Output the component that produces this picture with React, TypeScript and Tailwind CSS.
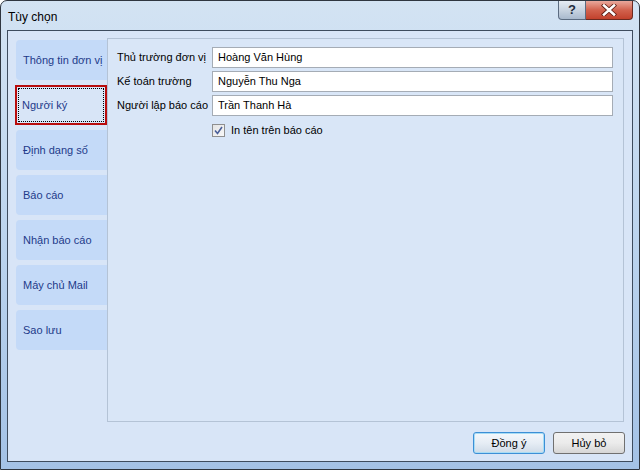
import React from 'react'

const tabs = [
  'Thông tin đơn vị',
  'Người ký',
  'Định dạng số',
  'Báo cáo',
  'Nhận báo cáo',
  'Máy chủ Mail',
  'Sao lưu',
]

const fields = [
  { label: 'Thủ trường đơn vị', value: 'Hoàng Văn Hùng' },
  { label: 'Kế toán trường', value: 'Nguyễn Thu Nga' },
  { label: 'Người lập báo cáo', value: 'Trần Thanh Hà' },
]

const font = { fontFamily: '"Liberation Sans", Arial, sans-serif' }

export default function App() {
  return (
    <div className="w-[640px] h-[470px] bg-white" style={font}>
      <div className="w-full h-full flex flex-col rounded-t-[7px] border border-[#2f3640] bg-gradient-to-b from-[#d3e3f3] via-[#bcd4ee] to-[#a4c2e6] overflow-hidden">
        {/* title bar */}
        <div className="h-[29px] flex items-start">
          <div className="pl-[7px] pt-[7px] text-[12px] text-black">Tùy chọn</div>
          <div className="ml-auto mr-[6px] flex">
            <div className="w-[28px] h-[19px] flex items-center justify-center rounded-bl-[4px] border border-t-0 border-[#5b6b80] bg-gradient-to-b from-[#e6ecf3] via-[#c9d4e1] to-[#a9b9cd] text-[13px] font-bold text-[#1f2b3a]">
              ?
            </div>
            <div className="w-[47px] h-[19px] flex items-center justify-center rounded-br-[4px] border border-t-0 border-l-0 border-[#6b2a20] bg-gradient-to-b from-[#e9a89c] via-[#d2624e] to-[#c2412c]">
              <svg width="16" height="12" viewBox="0 0 16 12">
                <path d="M3 1.5 L13 10.5 M13 1.5 L3 10.5" stroke="#5a1a10" strokeWidth="4.2" strokeLinecap="square" />
                <path d="M3 1.5 L13 10.5 M13 1.5 L3 10.5" stroke="#ffffff" strokeWidth="2.6" strokeLinecap="square" />
              </svg>
            </div>
          </div>
        </div>

        {/* client area */}
        <div className="flex-1 mx-[6px] mb-[7px] border border-[#3e4c5e] bg-[#d8e5f7] flex flex-col">
          <div className="flex pl-[8px] pr-[8px] pt-[7px]">
            <div className="w-[91px] flex flex-col gap-[5px] pt-[2px]">
              {tabs.map((t, i) =>
                i === 1 ? (
                  <div
                    key={t}
                    className="h-[40px] -ml-[1px] w-[92px] border-2 border-[#b80c0c] bg-[#d8e5f7] p-[1px]"
                  >
                    <div className="h-full border border-dotted border-black flex items-center pl-[3px] text-[11px] text-[#1e3a8a]">
                      {t}
                    </div>
                  </div>
                ) : (
                  <div
                    key={t}
                    className="h-[40px] rounded-l-[4px] bg-[#c4daf8] flex items-center pl-[7px] text-[11px] text-[#1e3a8a]"
                  >
                    {t}
                  </div>
                )
              )}
            </div>
            <div className="flex-1 h-[384px] border border-[#b4c3d6] bg-[#d9e6f7] pl-[9px] pr-[10px] pt-[8px]">
              <div className="flex flex-col gap-[3px]">
                {fields.map(f => (
                  <div key={f.label} className="flex items-center">
                    <div className="w-[95px] text-[11px] text-black">{f.label}</div>
                    <div className="flex-1 h-[21px] border border-[#a5acb5] bg-white flex items-center pl-[5px] text-[11px] text-black">
                      {f.value}
                    </div>
                  </div>
                ))}
              </div>
              <div className="flex items-center gap-[6px] pl-[95px] mt-[6px]">
                <div className="w-[13px] h-[13px] border border-[#8f8f8f] bg-gradient-to-br from-[#e4e4e4] to-[#f8f8f8] flex items-center justify-center">
                  <svg width="9" height="9" viewBox="0 0 9 9">
                    <path d="M1 4.5 L3.5 7.5 L8 1" stroke="#4a5f9a" strokeWidth="1.6" fill="none" />
                  </svg>
                </div>
                <span className="text-[11px] text-black">In tên trên báo cáo</span>
              </div>
            </div>
          </div>
          <div className="flex justify-end gap-[8px] pr-[7px] mt-[10px]">
            <button className="w-[72px] h-[22px] rounded-[3px] border border-[#3c8fd6] bg-gradient-to-b from-[#f4f8fc] via-[#e6edf5] to-[#cfdbe7] text-[11px] text-black shadow-[inset_0_0_0_1px_#a7dcf5]">
              Đồng ý
            </button>
            <button className="w-[72px] h-[22px] rounded-[3px] border border-[#707070] bg-gradient-to-b from-[#f2f2f2] via-[#ebebeb] to-[#d6d6d6] text-[11px] text-black">
              Hủy bỏ
            </button>
          </div>
        </div>
      </div>
    </div>
  )
}
